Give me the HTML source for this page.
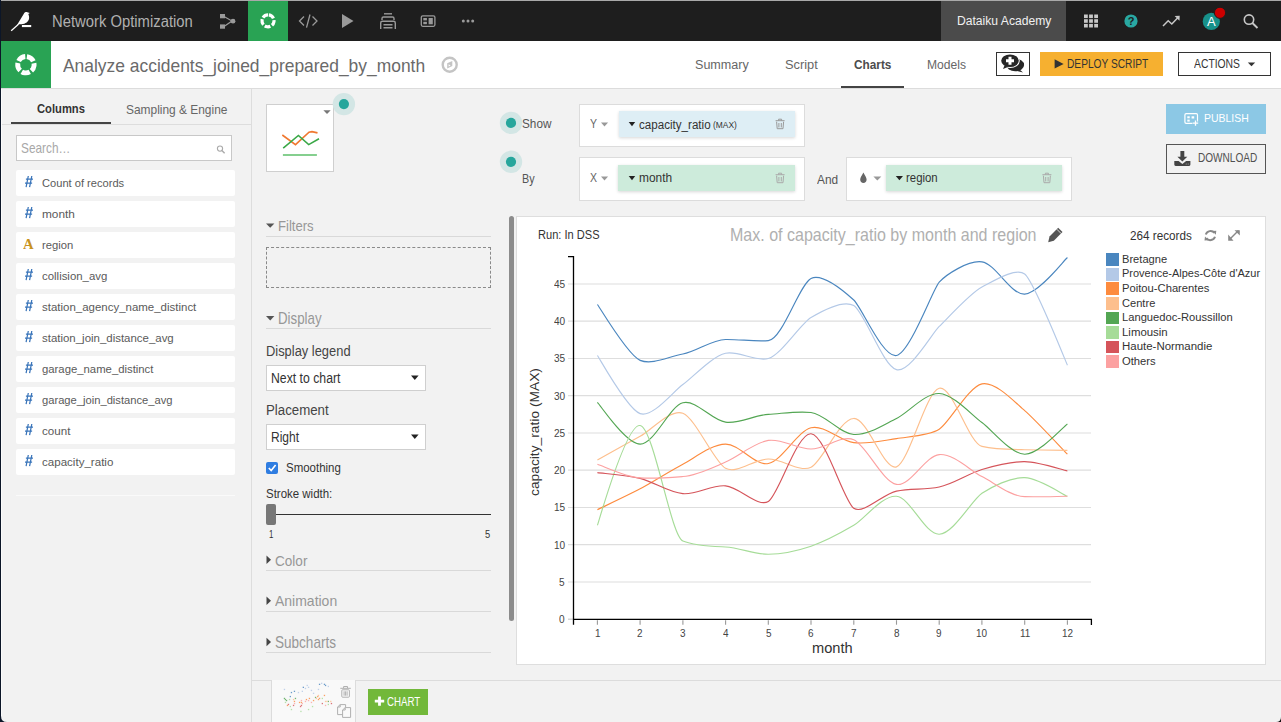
<!DOCTYPE html>
<html><head><meta charset="utf-8"><title>Dataiku Charts</title>
<style>
html,body{margin:0;padding:0;}
body{width:1281px;height:722px;overflow:hidden;position:relative;background:#f2f2f2;font-family:"Liberation Sans",sans-serif;}
.t{position:absolute;white-space:nowrap;line-height:1;transform-origin:0 0;}
.r{position:absolute;}
.s{position:absolute;overflow:visible;}
</style></head><body>
<div class="r" style="left:0px;top:0px;width:1281px;height:722px;background:#f2f2f2;"></div>
<div class="r" style="left:0px;top:0px;width:1281px;height:41px;background:#1e1e1e;"></div>
<div class="r" style="left:0px;top:0px;width:1281px;height:1px;background:#a9a9a9;"></div>
<div class="r" style="left:248px;top:1px;width:40px;height:40px;background:#29a354;"></div>
<div class="r" style="left:941px;top:1px;width:125px;height:40px;background:#4b4b4b;"></div>
<div class="r" style="left:0px;top:41px;width:1281px;height:47px;background:#ffffff;"></div>
<div class="r" style="left:1px;top:41px;width:50px;height:47px;background:#29a354;"></div>
<div class="r" style="left:0px;top:88px;width:1281px;height:1px;background:#dcdcdc;"></div>
<div class="r" style="left:0px;top:0px;width:1px;height:722px;background:#0c1628;"></div>
<div class="t" style="left:51.50px;top:14px;font-size:15.84px;color:#b0b0b0;font-weight:normal;transform:scaleX(0.9359);">Network Optimization</div>
<div class="t" style="left:956.60px;top:15px;font-size:12.65px;color:#f0f0f0;font-weight:normal;transform:scaleX(0.9593);">Dataiku Academy</div>
<svg class="s" style="left:0px;top:0px;" width="1281" height="722" viewBox="0 0 1281 722"><path d="M17.6,24.8 C18.6,24.1 20,24.3 21.5,24.2 C25.5,23.9 28.8,21.5 29.1,18.2 C29.3,16.4 28.8,15.0 28.3,13.9 L29.8,13.0 L27.3,12.2 C26,11.6 24.6,12.2 24.0,13.4 L17.0,25.0 Z" fill="#fff"/><path d="M11.2,30.7 L18.5,24.3" stroke="#fff" stroke-width="1.3"/><rect x="21.9" y="25.0" width="9.3" height="2.1" fill="#fff"/><g fill="#9a9a9a"><rect x="220" y="14" width="5" height="4.3"/><rect x="220" y="24.4" width="5" height="4.3"/><circle cx="233" cy="21.2" r="2.4"/></g><path d="M224,16.5 L232,21 L224,26.5" stroke="#9a9a9a" stroke-width="1.2" fill="none"/><circle cx="268" cy="20.8" r="6.0" fill="none" stroke="#fff" stroke-width="3.2" stroke-dasharray="5.760 1.780" transform="rotate(-81.5 268 20.8)"/><path d="M304,16.5 L299.5,21 L304,25.5 M312.5,16.5 L317,21 L312.5,25.5 M310,14.5 L306.5,27.7" stroke="#9a9a9a" stroke-width="1.3" fill="none"/><path d="M342,14 L353.5,21 L342,28 Z" fill="#9a9a9a"/><g stroke="#9a9a9a" stroke-width="1.4" fill="none"><path d="M384,13.8 H392"/><path d="M382,20 V18.5 Q382,17 383.5,17 H392.5 Q394,17 394,18.5 V20"/><path d="M380.7,29 V23 Q380.7,21.3 382.4,21.3 H393.6 Q395.3,21.3 395.3,23 V29"/><path d="M383.5,24.8 H392.5 M383.5,27.8 H392.5"/></g><rect x="421.3" y="15.8" width="13.6" height="10.5" rx="1.5" fill="none" stroke="#9a9a9a" stroke-width="1.3"/><g fill="#9a9a9a"><rect x="423.3" y="18" width="3.6" height="2.4"/><rect x="423.3" y="21.8" width="3.6" height="2.4"/><rect x="428.6" y="18" width="4.2" height="6.3"/></g><g fill="#9a9a9a"><circle cx="463.3" cy="21" r="1.5"/><circle cx="468" cy="21" r="1.5"/><circle cx="472.7" cy="21" r="1.5"/></g><g fill="#c8c8c8"><rect x="1084.0" y="14.5" width="3.8" height="3.6"/><rect x="1084.0" y="19.2" width="3.8" height="3.6"/><rect x="1084.0" y="23.9" width="3.8" height="3.6"/><rect x="1089.1" y="14.5" width="3.8" height="3.6"/><rect x="1089.1" y="19.2" width="3.8" height="3.6"/><rect x="1089.1" y="23.9" width="3.8" height="3.6"/><rect x="1094.2" y="14.5" width="3.8" height="3.6"/><rect x="1094.2" y="19.2" width="3.8" height="3.6"/><rect x="1094.2" y="23.9" width="3.8" height="3.6"/></g><circle cx="1131" cy="21" r="6.6" fill="#29a8a2"/><text x="1131" y="25.2" font-size="11" font-weight="bold" text-anchor="middle" fill="#1e1e1e" font-family="Liberation Sans">?</text><path d="M1163,26 L1168.2,20.8 L1171.8,24 L1178.5,17" stroke="#c8c8c8" stroke-width="1.5" fill="none"/><path d="M1174.6,16 L1179.7,15.8 L1179.5,20.8 Z" fill="#c8c8c8"/><circle cx="1211.3" cy="21.4" r="8.6" fill="#17918a"/><text x="1211.3" y="26.3" font-size="13" text-anchor="middle" fill="#fff" font-family="Liberation Sans">A</text><circle cx="1220" cy="12.8" r="5.6" fill="#cc0000" stroke="#1e1e1e" stroke-width="1"/><circle cx="1249" cy="19.6" r="4.7" fill="none" stroke="#c8c8c8" stroke-width="1.6"/><path d="M1252.4,23 L1257.5,28" stroke="#c8c8c8" stroke-width="1.9"/><circle cx="25.9" cy="64.7" r="8.2" fill="none" stroke="#fff" stroke-width="4.9" stroke-dasharray="8.301 2.004" transform="rotate(-83.0 25.9 64.7)"/><circle cx="449.7" cy="64.7" r="7.0" fill="none" stroke="#c4c4c4" stroke-width="2.4"/><path d="M447.2,63.3 L452.3,61.1 L452.3,66.1 L447.2,68.6 Z" fill="#c4c4c4"/><path d="M448.6,64.2 L450.6,65.4 L448.6,66.6 Z" fill="#fff"/></svg>
<div class="t" style="left:63.30px;top:57px;font-size:18.60px;color:#6a6a6a;font-weight:normal;transform:scaleX(0.9366);">Analyze accidents_joined_prepared_by_month</div>
<div class="t" style="left:695.20px;top:58px;font-size:13.66px;color:#666;font-weight:normal;transform:scaleX(0.9204);">Summary</div>
<div class="t" style="left:785.40px;top:58px;font-size:13.66px;color:#666;font-weight:normal;transform:scaleX(0.9392);">Script</div>
<div class="t" style="left:853.80px;top:58px;font-size:13.66px;color:#4c4c4c;font-weight:bold;transform:scaleX(0.8642);">Charts</div>
<div class="t" style="left:927.00px;top:58px;font-size:13.66px;color:#666;font-weight:normal;transform:scaleX(0.8855);">Models</div>
<div class="r" style="left:841px;top:86px;width:63px;height:2px;background:#444;"></div>
<div class="r" style="left:996px;top:52px;width:34px;height:24px;background:#fff;box-sizing:border-box;border:1px solid #333;"></div>
<svg class="s" style="left:990px;top:50px;" width="40" height="30" viewBox="990 50 40 30"><ellipse cx="1015.2" cy="65" rx="8.9" ry="6.2" fill="#262626"/><path d="M1019,69 L1023,72.6 L1015.5,70.5 Z" fill="#262626"/><ellipse cx="1010" cy="60.8" rx="9.8" ry="7.3" fill="#fff"/><ellipse cx="1010" cy="60.8" rx="8.8" ry="6.3" fill="#262626"/><path d="M1004.5,65.5 L1003,69 L1008.5,66.8 Z" fill="#262626"/><path d="M1010,56.8 V64.8 M1006,60.8 H1014" stroke="#fff" stroke-width="3"/></svg>
<div class="r" style="left:1040px;top:52px;width:123px;height:24px;background:#f6b030;"></div>
<svg class="s" style="left:1050px;top:55px;" width="20" height="20" viewBox="1050 55 20 20"><path d="M1054.6,59.2 L1063.6,63.9 L1054.6,68.6 Z" fill="#333"/></svg>
<div class="t" style="left:1066.80px;top:58px;font-size:12.50px;color:#333;font-weight:normal;transform:scaleX(0.8136);">DEPLOY SCRIPT</div>
<div class="r" style="left:1178px;top:52px;width:93px;height:24px;background:#fff;box-sizing:border-box;border:1px solid #333;"></div>
<div class="t" style="left:1194.00px;top:58px;font-size:12.50px;color:#333;font-weight:normal;transform:scaleX(0.8279);">ACTIONS</div>
<svg class="s" style="left:1240px;top:55px;" width="20" height="20" viewBox="1240 55 20 20"><path d="M1247.8,62.5 L1255.2,62.5 L1251.5,66.3 Z" fill="#333"/></svg>
<div class="r" style="left:251px;top:89px;width:1px;height:633px;background:#dddddd;"></div>
<div class="t" style="left:36.90px;top:103px;font-size:12.50px;color:#333;font-weight:bold;transform:scaleX(0.8958);">Columns</div>
<div class="t" style="left:125.80px;top:103px;font-size:13.37px;color:#666;font-weight:normal;transform:scaleX(0.8925);">Sampling &amp; Engine</div>
<div class="r" style="left:1px;top:124px;width:250px;height:1px;background:#dddddd;"></div>
<div class="r" style="left:11px;top:122px;width:100px;height:2px;background:#444;"></div>
<div class="r" style="left:16px;top:135px;width:216px;height:26px;background:#fff;box-sizing:border-box;border:1px solid #c8c8c8;"></div>
<div class="t" style="left:21.30px;top:141px;font-size:14.10px;color:#a8a8a8;font-weight:normal;transform:scaleX(0.8389);">Search…</div>
<svg class="s" style="left:210px;top:140px;" width="20" height="20" viewBox="210 140 20 20"><circle cx="220" cy="148.6" r="2.6" fill="none" stroke="#aaa" stroke-width="1.1"/><path d="M221.9,150.5 L224.6,153.2" stroke="#aaa" stroke-width="1.4"/></svg>
<div class="r" style="left:16px;top:170px;width:219px;height:26px;background:#fff;border-radius:2px;"></div>
<div class="t" style="left:41.60px;top:177px;font-size:11.77px;color:#5a5a5a;font-weight:normal;transform:scaleX(0.9445);">Count of records</div>
<div class="r" style="left:16px;top:201px;width:219px;height:26px;background:#fff;border-radius:2px;"></div>
<div class="t" style="left:41.60px;top:208px;font-size:11.77px;color:#5a5a5a;font-weight:normal;transform:scaleX(1.0055);">month</div>
<div class="r" style="left:16px;top:232px;width:219px;height:26px;background:#fff;border-radius:2px;"></div>
<div class="t" style="left:41.60px;top:239px;font-size:11.77px;color:#5a5a5a;font-weight:normal;transform:scaleX(0.9565);">region</div>
<div class="t" style="left:23.3px;top:237px;font-size:14px;line-height:16px;color:#c8931f;font-weight:bold;font-family:'Liberation Serif',serif;transform:scaleX(1.05)">A</div>
<div class="r" style="left:16px;top:263px;width:219px;height:26px;background:#fff;border-radius:2px;"></div>
<div class="t" style="left:41.60px;top:270px;font-size:11.77px;color:#5a5a5a;font-weight:normal;transform:scaleX(0.9702);">collision_avg</div>
<div class="r" style="left:16px;top:294px;width:219px;height:26px;background:#fff;border-radius:2px;"></div>
<div class="t" style="left:41.60px;top:301px;font-size:11.77px;color:#5a5a5a;font-weight:normal;transform:scaleX(0.9749);">station_agency_name_distinct</div>
<div class="r" style="left:16px;top:325px;width:219px;height:26px;background:#fff;border-radius:2px;"></div>
<div class="t" style="left:41.60px;top:332px;font-size:11.77px;color:#5a5a5a;font-weight:normal;transform:scaleX(0.9728);">station_join_distance_avg</div>
<div class="r" style="left:16px;top:356px;width:219px;height:26px;background:#fff;border-radius:2px;"></div>
<div class="t" style="left:41.60px;top:363px;font-size:11.77px;color:#5a5a5a;font-weight:normal;transform:scaleX(0.9625);">garage_name_distinct</div>
<div class="r" style="left:16px;top:387px;width:219px;height:26px;background:#fff;border-radius:2px;"></div>
<div class="t" style="left:41.60px;top:394px;font-size:11.77px;color:#5a5a5a;font-weight:normal;transform:scaleX(0.9501);">garage_join_distance_avg</div>
<div class="r" style="left:16px;top:418px;width:219px;height:26px;background:#fff;border-radius:2px;"></div>
<div class="t" style="left:41.60px;top:425px;font-size:11.77px;color:#5a5a5a;font-weight:normal;transform:scaleX(0.9861);">count</div>
<div class="r" style="left:16px;top:449px;width:219px;height:26px;background:#fff;border-radius:2px;"></div>
<div class="t" style="left:41.60px;top:456px;font-size:11.77px;color:#5a5a5a;font-weight:normal;transform:scaleX(0.9830);">capacity_ratio</div>
<svg class="s" style="left:0px;top:0px;" width="1281" height="722" viewBox="0 0 1281 722"><path d="M26.1,187.1 L28.3,176 M29.6,187.1 L31.8,176 M25.9,179.2 H33 M25,183.1 H32.1" stroke="#3a75ba" stroke-width="1.25" fill="none"/><path d="M26.1,218.1 L28.3,207 M29.6,218.1 L31.8,207 M25.9,210.2 H33 M25,214.1 H32.1" stroke="#3a75ba" stroke-width="1.25" fill="none"/><path d="M26.1,280.1 L28.3,269 M29.6,280.1 L31.8,269 M25.9,272.2 H33 M25,276.1 H32.1" stroke="#3a75ba" stroke-width="1.25" fill="none"/><path d="M26.1,311.1 L28.3,300 M29.6,311.1 L31.8,300 M25.9,303.2 H33 M25,307.1 H32.1" stroke="#3a75ba" stroke-width="1.25" fill="none"/><path d="M26.1,342.1 L28.3,331 M29.6,342.1 L31.8,331 M25.9,334.2 H33 M25,338.1 H32.1" stroke="#3a75ba" stroke-width="1.25" fill="none"/><path d="M26.1,373.1 L28.3,362 M29.6,373.1 L31.8,362 M25.9,365.2 H33 M25,369.1 H32.1" stroke="#3a75ba" stroke-width="1.25" fill="none"/><path d="M26.1,404.1 L28.3,393 M29.6,404.1 L31.8,393 M25.9,396.2 H33 M25,400.1 H32.1" stroke="#3a75ba" stroke-width="1.25" fill="none"/><path d="M26.1,435.1 L28.3,424 M29.6,435.1 L31.8,424 M25.9,427.2 H33 M25,431.1 H32.1" stroke="#3a75ba" stroke-width="1.25" fill="none"/><path d="M26.1,466.1 L28.3,455 M29.6,466.1 L31.8,455 M25.9,458.2 H33 M25,462.1 H32.1" stroke="#3a75ba" stroke-width="1.25" fill="none"/></svg>
<div class="r" style="left:16px;top:495px;width:219px;height:1px;background:#fafafa;"></div>
<div class="r" style="left:266px;top:104px;width:68px;height:68px;background:#fff;box-sizing:border-box;border:1px solid #cfcfcf;"></div>
<svg class="s" style="left:260px;top:100px;" width="80" height="80" viewBox="260 100 80 80"><path d="M323.4,110.3 L330.7,110.3 L327,114 Z" fill="#777"/><polyline points="282.3,135 295.5,144.6 309,132.2 312,131.6 317.5,132.9" fill="none" stroke="#f07830" stroke-width="1.6"/><polyline points="283.2,148.2 298.4,135.5 308.7,144.6 319,138.8" fill="none" stroke="#3aa847" stroke-width="1.6"/><path d="M282.9,155 H316.9" stroke="#5cbf6a" stroke-width="1.6"/></svg>
<svg class="s" style="left:0px;top:0px;" width="1281" height="722" viewBox="0 0 1281 722"><circle cx="343.9" cy="104.1" r="11.2" fill="#d3e6e5"/><circle cx="343.9" cy="104.1" r="5.1" fill="#26a69c"/><circle cx="511" cy="122.9" r="11.2" fill="#d3e6e5"/><circle cx="511" cy="122.9" r="5.1" fill="#26a69c"/><circle cx="511" cy="161.8" r="11.2" fill="#d3e6e5"/><circle cx="511" cy="161.8" r="5.1" fill="#26a69c"/></svg>
<svg class="s" style="left:0px;top:0px;" width="1281" height="722" viewBox="0 0 1281 722"><path d="M266,223.4 L274.4,223.4 L270.2,227.8 Z" fill="#555"/></svg>
<div class="t" style="left:278.00px;top:218px;font-size:15.26px;color:#979797;font-weight:normal;transform:scaleX(0.8593);">Filters</div>
<div class="r" style="left:266px;top:236px;width:225px;height:1px;background:#d9d9d9;"></div>
<div class="r" style="left:266px;top:247px;width:225px;height:41px;box-sizing:border-box;border:1px dashed #8a8a8a;"></div>
<svg class="s" style="left:0px;top:0px;" width="1281" height="722" viewBox="0 0 1281 722"><path d="M266,316.0 L274.4,316.0 L270.2,320.4 Z" fill="#555"/></svg>
<div class="t" style="left:278.00px;top:311px;font-size:15.70px;color:#979797;font-weight:normal;transform:scaleX(0.8471);">Display</div>
<div class="r" style="left:266px;top:328px;width:225px;height:1px;background:#d9d9d9;"></div>
<div class="t" style="left:266.00px;top:344px;font-size:14.24px;color:#444;font-weight:normal;transform:scaleX(0.9055);">Display legend</div>
<div class="r" style="left:266px;top:365px;width:160px;height:26px;background:#fff;box-sizing:border-box;border:1px solid #cfcfcf;"></div>
<div class="t" style="left:271.30px;top:372px;font-size:13.95px;color:#333;font-weight:normal;transform:scaleX(0.8787);">Next to chart</div>
<svg class="s" style="left:0px;top:0px;" width="1281" height="722" viewBox="0 0 1281 722"><path d="M411,375.6 L418.6,375.6 L414.8,379.9 Z" fill="#222"/></svg>
<div class="t" style="left:266.00px;top:403px;font-size:14.24px;color:#444;font-weight:normal;transform:scaleX(0.9317);">Placement</div>
<div class="r" style="left:266px;top:424px;width:160px;height:26px;background:#fff;box-sizing:border-box;border:1px solid #cfcfcf;"></div>
<div class="t" style="left:271.30px;top:431px;font-size:13.95px;color:#333;font-weight:normal;transform:scaleX(0.8627);">Right</div>
<svg class="s" style="left:0px;top:0px;" width="1281" height="722" viewBox="0 0 1281 722"><path d="M411,434.6 L418.6,434.6 L414.8,438.9 Z" fill="#222"/></svg>
<div class="r" style="left:266px;top:462px;width:12px;height:12px;background:#2f7de1;border-radius:2px;"></div>
<svg class="s" style="left:0px;top:0px;" width="1281" height="722" viewBox="0 0 1281 722"><path d="M268.8,468 L271.2,470.6 L275.6,465" stroke="#fff" stroke-width="1.6" fill="none"/></svg>
<div class="t" style="left:286.00px;top:462px;font-size:12.50px;color:#333;font-weight:normal;transform:scaleX(0.9170);">Smoothing</div>
<div class="t" style="left:266.00px;top:488px;font-size:12.50px;color:#333;font-weight:normal;transform:scaleX(0.9176);">Stroke width:</div>
<div class="r" style="left:276px;top:514px;width:215px;height:1px;background:#333;"></div>
<div class="r" style="left:266px;top:504px;width:10px;height:21px;background:#777;border-radius:2px;"></div>
<div class="t" style="left:268.60px;top:529px;font-size:11.19px;color:#333;font-weight:normal;transform:scaleX(0.7070);">1</div>
<div class="t" style="left:485.30px;top:529px;font-size:11.19px;color:#333;font-weight:normal;transform:scaleX(0.8355);">5</div>
<svg class="s" style="left:0px;top:0px;" width="1281" height="722" viewBox="0 0 1281 722"><path d="M266.5,555.5 L271,559.8 L266.5,564.1 Z" fill="#444"/></svg>
<div class="t" style="left:274.50px;top:553px;font-size:15.55px;color:#979797;font-weight:normal;transform:scaleX(0.8718);">Color</div>
<div class="r" style="left:266px;top:570px;width:225px;height:1px;background:#d9d9d9;"></div>
<svg class="s" style="left:0px;top:0px;" width="1281" height="722" viewBox="0 0 1281 722"><path d="M266.5,596.4 L271,600.7 L266.5,605.0 Z" fill="#444"/></svg>
<div class="t" style="left:274.50px;top:593px;font-size:15.12px;color:#979797;font-weight:normal;transform:scaleX(0.9254);">Animation</div>
<div class="r" style="left:266px;top:611px;width:225px;height:1px;background:#d9d9d9;"></div>
<svg class="s" style="left:0px;top:0px;" width="1281" height="722" viewBox="0 0 1281 722"><path d="M266.5,637.7 L271,642.0 L266.5,646.3 Z" fill="#444"/></svg>
<div class="t" style="left:274.50px;top:635px;font-size:15.70px;color:#979797;font-weight:normal;transform:scaleX(0.8631);">Subcharts</div>
<div class="r" style="left:266px;top:652px;width:225px;height:1px;background:#d9d9d9;"></div>
<div class="r" style="left:509px;top:216px;width:5px;height:405px;background:#8c8c8c;border-radius:3px;"></div>
<div class="r" style="left:252px;top:680px;width:1029px;height:1px;background:#dcdcdc;"></div>
<div class="r" style="left:271px;top:680px;width:85px;height:42px;background:#f9f9f9;box-sizing:border-box;border-left:1px solid #dcdcdc;border-right:1px solid #dcdcdc;"></div>
<svg class="s" style="left:0px;top:0px;" width="1281" height="722" viewBox="0 0 1281 722"><g stroke="#b0b0b0" stroke-width="1" fill="none"><path d="M340.3,688.3 H350.8 M343.6,688.3 V686.5 H347.5 V688.3"/><rect x="341.8" y="689.8" width="7.6" height="7.4" rx="0.8"/><path d="M344.1,691.3 V695.7 M345.6,691.3 V695.7 M347.1,691.3 V695.7"/><path d="M337.6,714.6 V707 L340.2,704.6 H345.6 V714.6 Z M337.6,707 H340.2 V704.6"/><path d="M342.6,717.4 V710 L345.2,707.6 H350.6 V717.4 Z" fill="#fafafa"/><path d="M342.6,710 H345.2 V707.6"/></g></svg>
<div class="r" style="left:368px;top:689px;width:60px;height:26px;background:#72b83a;"></div>
<svg class="s" style="left:0px;top:0px;" width="1281" height="722" viewBox="0 0 1281 722"><path d="M374.8,701.1 H384.2 M379.5,696.4 V705.8" stroke="#fff" stroke-width="2.8"/></svg>
<div class="t" style="left:386.90px;top:695px;font-size:13.23px;color:#fff;font-weight:normal;transform:scaleX(0.7348);">CHART</div>
<div class="t" style="left:521.70px;top:118px;font-size:12.50px;color:#555;font-weight:normal;transform:scaleX(0.9403);">Show</div>
<div class="t" style="left:521.70px;top:173px;font-size:12.06px;color:#555;font-weight:normal;transform:scaleX(0.8949);">By</div>
<div class="r" style="left:579px;top:104px;width:226px;height:43px;background:#fff;box-sizing:border-box;border:1px solid #dcdcdc;"></div>
<div class="r" style="left:579px;top:157px;width:226px;height:44px;background:#fff;box-sizing:border-box;border:1px solid #dcdcdc;"></div>
<div class="r" style="left:846px;top:157px;width:226px;height:44px;background:#fff;box-sizing:border-box;border:1px solid #dcdcdc;"></div>
<div class="t" style="left:589.60px;top:118px;font-size:12.21px;color:#666;font-weight:normal;transform:scaleX(0.8595);">Y</div>
<div class="t" style="left:589.60px;top:172px;font-size:12.21px;color:#666;font-weight:normal;transform:scaleX(0.8595);">X</div>
<svg class="s" style="left:0px;top:0px;" width="1281" height="722" viewBox="0 0 1281 722"><path d="M601,122.4 L608.1,122.4 L604.5,126.6 Z" fill="#999"/><path d="M601,176.4 L608.1,176.4 L604.5,180.6 Z" fill="#999"/><path d="M873.4,176.4 L881.3,176.4 L877.3,180.6 Z" fill="#999"/><path d="M863.4,172.6 C862,175.5 860.2,177.5 860.2,179.6 C860.2,181.6 861.6,183 863.4,183 C865.2,183 866.6,181.6 866.6,179.6 C866.6,177.5 864.8,175.5 863.4,172.6 Z" fill="#666"/></svg>
<div class="r" style="left:619px;top:111px;width:176px;height:26px;background:#deeef5;box-shadow:0 1px 3px rgba(0,0,0,0.16);"></div>
<div class="r" style="left:618px;top:165px;width:177px;height:26px;background:#cdebdb;box-shadow:0 1px 3px rgba(0,0,0,0.16);"></div>
<div class="r" style="left:886px;top:165px;width:176px;height:26px;background:#cdebdb;box-shadow:0 1px 3px rgba(0,0,0,0.16);"></div>
<svg class="s" style="left:0px;top:0px;" width="1281" height="722" viewBox="0 0 1281 722"><path d="M628.7,122.1 L635.2,122.1 L632,126.3 Z" fill="#222"/><path d="M628.7,176.1 L635.2,176.1 L632,180.3 Z" fill="#222"/><path d="M895.8,176.1 L903,176.1 L899.4,180.3 Z" fill="#222"/></svg>
<div class="t" style="left:639.00px;top:119px;font-size:12.50px;color:#333;font-weight:normal;transform:scaleX(0.9284);">capacity_ratio</div>
<div class="t" style="left:713.40px;top:120px;font-size:9.59px;color:#333;font-weight:normal;transform:scaleX(0.8794);">(MAX)</div>
<div class="t" style="left:639.00px;top:172px;font-size:12.50px;color:#333;font-weight:normal;transform:scaleX(0.9528);">month</div>
<div class="t" style="left:906.40px;top:172px;font-size:12.50px;color:#333;font-weight:normal;transform:scaleX(0.9124);">region</div>
<div class="t" style="left:817.40px;top:174px;font-size:12.79px;color:#555;font-weight:normal;transform:scaleX(0.9272);">And</div>
<svg class="s" style="left:0px;top:0px;" width="1281" height="722" viewBox="0 0 1281 722"><g stroke="#999" stroke-width="1" fill="none"><path d="M775.6,120.7 H784.6"/><path d="M778.6,120.7 V119.2 H781.6 V120.7"/><path d="M776.6,121.7 L777.2,128.7 H783.0 L783.6,121.7"/><path d="M778.9,123.0 V127.4 M781.3000000000001,123.0 V127.4"/></g><g stroke="#aaa" stroke-width="1" fill="none"><path d="M775.6,174.7 H784.6"/><path d="M778.6,174.7 V173.2 H781.6 V174.7"/><path d="M776.6,175.7 L777.2,182.7 H783.0 L783.6,175.7"/><path d="M778.9,177.0 V181.39999999999998 M781.3000000000001,177.0 V181.39999999999998"/></g><g stroke="#aaa" stroke-width="1" fill="none"><path d="M1042.4,174.7 H1051.4"/><path d="M1045.4,174.7 V173.2 H1048.4 V174.7"/><path d="M1043.4,175.7 L1044.0,182.7 H1049.8000000000002 L1050.4,175.7"/><path d="M1045.7,177.0 V181.39999999999998 M1048.1000000000001,177.0 V181.39999999999998"/></g></svg>
<div class="r" style="left:1166px;top:104px;width:100px;height:30px;background:#8cc8e5;"></div>
<svg class="s" style="left:0px;top:0px;" width="1281" height="722" viewBox="0 0 1281 722"><rect x="1184.9" y="113.6" width="12.6" height="9.8" rx="1.3" fill="none" stroke="#fff" stroke-width="1.2"/><g fill="#fff"><rect x="1187.3" y="116.3" width="2.4" height="2"/><rect x="1187.3" y="119.6" width="2.4" height="2"/><rect x="1191.6" y="116.3" width="2.6" height="2.2"/></g><path d="M1195.5,120 V126 M1192.5,123 H1198.5" stroke="#8cc8e5" stroke-width="3.2"/><path d="M1195.5,120.5 V125.8 M1192.8,123.1 H1198.2" stroke="#fff" stroke-width="1.3"/></svg>
<div class="t" style="left:1204.20px;top:113px;font-size:11.48px;color:#fff;font-weight:normal;transform:scaleX(0.9117);">PUBLISH</div>
<div class="r" style="left:1166px;top:144px;width:100px;height:30px;box-sizing:border-box;border:1px solid #555;"></div>
<svg class="s" style="left:0px;top:0px;" width="1281" height="722" viewBox="0 0 1281 722"><rect x="1180.4" y="151" width="3.9" height="6.5" fill="#444"/><path d="M1177.4,156.8 H1187.3 L1182.35,161.6 Z" fill="#444"/><path d="M1174.3,161 H1178.6 L1182.35,164 L1186.1,161 H1190.4 V164.6 Q1190.4,165.9 1189.1,165.9 H1175.6 Q1174.3,165.9 1174.3,164.6 Z" fill="#444"/><circle cx="1186.2" cy="164" r="0.5" fill="#bbb"/><circle cx="1188.2" cy="164" r="0.5" fill="#bbb"/></svg>
<div class="t" style="left:1198.00px;top:152px;font-size:12.50px;color:#505050;font-weight:normal;transform:scaleX(0.8042);">DOWNLOAD</div>
<div class="r" style="left:516px;top:216px;width:750px;height:449px;background:#fff;box-sizing:border-box;border:1px solid #dedede;"></div>
<div class="t" style="left:537.50px;top:229px;font-size:12.35px;color:#333;font-weight:normal;transform:scaleX(0.8971);">Run: In DSS</div>
<div class="t" style="left:729.60px;top:227px;font-size:17.44px;color:#b0b0b0;font-weight:normal;transform:scaleX(0.9193);">Max. of capacity_ratio by month and region</div>
<svg class="s" style="left:0px;top:0px;" width="1281" height="722" viewBox="0 0 1281 722"><path d="M1049.5,236.5 L1058.2,227.8 L1062.5,232.1 L1053.8,240.8 L1048.2,242.2 Z" fill="#555"/><path d="M1056.8,229.2 L1061.1,233.5" stroke="#fff" stroke-width="0.8"/></svg>
<div class="t" style="left:1129.90px;top:230px;font-size:12.79px;color:#333;font-weight:normal;transform:scaleX(0.9150);">264 records</div>
<svg class="s" style="left:0px;top:0px;" width="1281" height="722" viewBox="0 0 1281 722"><g stroke="#888" stroke-width="2" fill="none"><path d="M1205.8,234.5 A5,5 0 0 1 1214.5,233"/><path d="M1215,236.7 A5,5 0 0 1 1206.3,238.2"/></g><path d="M1212.3,231 L1216.3,230.8 L1215.8,234.8 Z M1208.5,240.2 L1204.5,240.4 L1205,236.4 Z" fill="#888"/><g stroke="#888" stroke-width="1.5"><path d="M1229.5,239.5 L1238.5,230.5"/></g><path d="M1234.5,230.2 L1239.8,230.2 L1239.8,235.5 Z M1228.2,234.5 L1228.2,240.8 L1233.5,240.8 Z" fill="#888"/></svg>
<div class="r" style="left:1106px;top:253.3px;width:13px;height:12.800000000000011px;background:#4a86bf;"></div>
<div class="t" style="left:1121.60px;top:254px;font-size:10.61px;color:#333;font-weight:normal;transform:scaleX(1.0474);">Bretagne</div>
<div class="r" style="left:1106px;top:267.9px;width:13px;height:12.800000000000011px;background:#b4c9e7;"></div>
<div class="t" style="left:1121.60px;top:268px;font-size:10.61px;color:#333;font-weight:normal;transform:scaleX(1.0342);">Provence-Alpes-Côte d&#x27;Azur</div>
<div class="r" style="left:1106px;top:282.4px;width:13px;height:12.800000000000011px;background:#fd8b3e;"></div>
<div class="t" style="left:1121.60px;top:283px;font-size:10.61px;color:#333;font-weight:normal;transform:scaleX(1.0573);">Poitou-Charentes</div>
<div class="r" style="left:1106px;top:297.0px;width:13px;height:12.800000000000011px;background:#fdbf8d;"></div>
<div class="t" style="left:1121.60px;top:298px;font-size:10.61px;color:#333;font-weight:normal;transform:scaleX(1.0457);">Centre</div>
<div class="r" style="left:1106px;top:311.6px;width:13px;height:12.799999999999955px;background:#53a653;"></div>
<div class="t" style="left:1121.60px;top:312px;font-size:10.61px;color:#333;font-weight:normal;transform:scaleX(1.0534);">Languedoc-Roussillon</div>
<div class="r" style="left:1106px;top:326.1px;width:13px;height:12.799999999999955px;background:#a6dc98;"></div>
<div class="t" style="left:1121.60px;top:327px;font-size:10.61px;color:#333;font-weight:normal;transform:scaleX(1.0763);">Limousin</div>
<div class="r" style="left:1106px;top:340.7px;width:13px;height:12.800000000000011px;background:#d5545a;"></div>
<div class="t" style="left:1121.60px;top:341px;font-size:10.61px;color:#333;font-weight:normal;transform:scaleX(1.0795);">Haute-Normandie</div>
<div class="r" style="left:1106px;top:355.3px;width:13px;height:12.800000000000011px;background:#fca1a1;"></div>
<div class="t" style="left:1121.60px;top:356px;font-size:10.61px;color:#333;font-weight:normal;transform:scaleX(1.0584);">Others</div>
<div class="t" style="left:559.40px;top:577px;font-size:11.19px;color:#444;font-weight:normal;transform:scaleX(0.9000);">5</div>
<div class="t" style="left:553.80px;top:540px;font-size:11.19px;color:#444;font-weight:normal;transform:scaleX(0.9000);">10</div>
<div class="t" style="left:553.80px;top:502px;font-size:11.19px;color:#444;font-weight:normal;transform:scaleX(0.9000);">15</div>
<div class="t" style="left:553.80px;top:465px;font-size:11.19px;color:#444;font-weight:normal;transform:scaleX(0.9000);">20</div>
<div class="t" style="left:553.80px;top:428px;font-size:11.19px;color:#444;font-weight:normal;transform:scaleX(0.9000);">25</div>
<div class="t" style="left:553.80px;top:391px;font-size:11.19px;color:#444;font-weight:normal;transform:scaleX(0.9000);">30</div>
<div class="t" style="left:553.80px;top:353px;font-size:11.19px;color:#444;font-weight:normal;transform:scaleX(0.9000);">35</div>
<div class="t" style="left:553.80px;top:316px;font-size:11.19px;color:#444;font-weight:normal;transform:scaleX(0.9000);">40</div>
<div class="t" style="left:553.80px;top:279px;font-size:11.19px;color:#444;font-weight:normal;transform:scaleX(0.9000);">45</div>
<div class="t" style="left:559.40px;top:614px;font-size:11.19px;color:#444;font-weight:normal;transform:scaleX(0.9000);">0</div>
<div class="t" style="left:594.64px;top:628px;font-size:11.05px;color:#444;font-weight:normal;transform:scaleX(0.9000);">1</div>
<div class="t" style="left:637.36px;top:628px;font-size:11.05px;color:#444;font-weight:normal;transform:scaleX(0.9000);">2</div>
<div class="t" style="left:680.09px;top:628px;font-size:11.05px;color:#444;font-weight:normal;transform:scaleX(0.9000);">3</div>
<div class="t" style="left:722.82px;top:628px;font-size:11.05px;color:#444;font-weight:normal;transform:scaleX(0.9000);">4</div>
<div class="t" style="left:765.54px;top:628px;font-size:11.05px;color:#444;font-weight:normal;transform:scaleX(0.9000);">5</div>
<div class="t" style="left:808.27px;top:628px;font-size:11.05px;color:#444;font-weight:normal;transform:scaleX(0.9000);">6</div>
<div class="t" style="left:851.00px;top:628px;font-size:11.05px;color:#444;font-weight:normal;transform:scaleX(0.9000);">7</div>
<div class="t" style="left:893.73px;top:628px;font-size:11.05px;color:#444;font-weight:normal;transform:scaleX(0.9000);">8</div>
<div class="t" style="left:936.45px;top:628px;font-size:11.05px;color:#444;font-weight:normal;transform:scaleX(0.9000);">9</div>
<div class="t" style="left:976.42px;top:628px;font-size:11.05px;color:#444;font-weight:normal;transform:scaleX(0.9000);">10</div>
<div class="t" style="left:1019.51px;top:628px;font-size:11.05px;color:#444;font-weight:normal;transform:scaleX(0.9000);">11</div>
<div class="t" style="left:1061.87px;top:628px;font-size:11.05px;color:#444;font-weight:normal;transform:scaleX(0.9000);">12</div>
<svg class="s" style="left:0px;top:0px;" width="1281" height="722" viewBox="0 0 1281 722"><path d="M568,582.0 H1091" stroke="#dedede" stroke-width="1.2"/><path d="M568,544.7 H1091" stroke="#dedede" stroke-width="1.2"/><path d="M568,507.5 H1091" stroke="#dedede" stroke-width="1.2"/><path d="M568,470.2 H1091" stroke="#dedede" stroke-width="1.2"/><path d="M568,433.0 H1091" stroke="#dedede" stroke-width="1.2"/><path d="M568,395.7 H1091" stroke="#dedede" stroke-width="1.2"/><path d="M568,358.5 H1091" stroke="#dedede" stroke-width="1.2"/><path d="M568,321.2 H1091" stroke="#dedede" stroke-width="1.2"/><path d="M568,284.0 H1091" stroke="#dedede" stroke-width="1.2"/><path d="M568,619.2 H573" stroke="#ccc" stroke-width="1.2"/><path d="M597.4,620.2 V624.7" stroke="#999" stroke-width="1.1"/><path d="M640.1,620.2 V624.7" stroke="#999" stroke-width="1.1"/><path d="M682.9,620.2 V624.7" stroke="#999" stroke-width="1.1"/><path d="M725.6,620.2 V624.7" stroke="#999" stroke-width="1.1"/><path d="M768.3,620.2 V624.7" stroke="#999" stroke-width="1.1"/><path d="M811.0,620.2 V624.7" stroke="#999" stroke-width="1.1"/><path d="M853.8,620.2 V624.7" stroke="#999" stroke-width="1.1"/><path d="M896.5,620.2 V624.7" stroke="#999" stroke-width="1.1"/><path d="M939.2,620.2 V624.7" stroke="#999" stroke-width="1.1"/><path d="M981.9,620.2 V624.7" stroke="#999" stroke-width="1.1"/><path d="M1024.7,620.2 V624.7" stroke="#999" stroke-width="1.1"/><path d="M1067.4,620.2 V624.7" stroke="#999" stroke-width="1.1"/><path d="M568,256.6 H573.5 V624.8" stroke="#000" stroke-width="1.3" fill="none"/><path d="M573,619.4 H1091.4 V625" stroke="#000" stroke-width="1.3" fill="none"/></svg>
<div class="t" style="left:812.20px;top:642px;font-size:13.95px;color:#333;font-weight:normal;transform:scaleX(1.0496);">month</div>
<div class="t" style="left:527.73px;top:496.20px;font-size:13.66px;color:#333;transform-origin:0 0;transform:rotate(-90deg) scaleX(1.0095);">capacity_ratio (MAX)</div>
<svg class="s" style="left:0px;top:0px;" width="1281" height="722" viewBox="0 0 1281 722"><path d="M597.40,304.48C600.03,307.92,627.93,355.35,640.13,360.35C652.32,365.35,669.02,356.41,682.85,354.02C696.69,351.63,711.34,339.73,725.58,339.49C739.82,339.25,754.15,341.70,768.31,340.61C782.47,339.53,799.42,283.93,811.04,278.41C822.66,272.89,845.91,292.93,853.76,300.02C861.62,307.10,882.85,358.36,896.49,355.51C910.14,352.65,932.75,289.23,939.22,282.14C945.69,275.05,967.97,259.93,981.95,261.88C995.92,263.83,1010.47,294.77,1024.67,294.06C1038.88,293.34,1063.28,261.07,1067.40,257.56" stroke="#4a86bf" stroke-width="1.15" fill="none"/><path d="M597.40,355.51C599.90,358.91,627.36,409.27,640.13,413.61C652.89,417.95,673.35,391.27,682.85,384.56C692.36,377.85,711.97,356.21,725.58,353.27C739.19,350.34,755.21,362.36,768.31,358.49C781.41,354.61,800.53,323.78,811.04,317.52C821.55,311.26,843.18,299.38,853.76,305.60C864.35,311.82,883.05,366.38,896.49,369.66C909.93,372.94,931.86,333.58,939.22,326.46C946.57,319.34,970.64,292.75,981.95,286.98C993.25,281.21,1015.64,267.08,1024.67,273.94C1033.70,280.80,1066.12,362.46,1067.40,365.19" stroke="#b4c9e7" stroke-width="1.15" fill="none"/><path d="M597.40,509.70C603.15,506.89,629.02,494.75,640.13,488.84C651.23,482.94,671.67,470.11,682.85,464.26C694.04,458.41,711.34,444.28,725.58,444.15C739.82,444.03,754.57,466.15,768.31,463.52C782.05,460.88,797.59,431.04,811.04,427.76C824.48,424.48,839.75,440.89,853.76,442.66C867.78,444.43,882.58,440.73,896.49,438.56C910.40,436.40,929.07,435.70,939.22,429.25C949.37,422.81,968.35,386.78,981.95,383.82C995.54,380.85,1016.19,403.64,1024.67,410.63C1033.16,417.62,1063.91,450.65,1067.40,454.21" stroke="#fd8b3e" stroke-width="1.15" fill="none"/><path d="M597.40,460.02C602.85,457.00,629.17,442.33,640.13,436.33C651.09,430.33,670.37,408.56,682.85,413.24C695.34,417.92,714.52,462.43,725.58,468.36C736.64,474.29,754.07,459.24,768.31,459.05C782.55,458.86,799.42,472.76,811.04,467.24C822.66,461.72,839.52,418.51,853.76,418.45C868.01,418.39,883.83,471.34,896.49,466.87C909.16,462.40,925.75,391.51,939.22,388.28C952.69,385.06,968.45,443.22,981.95,446.39C995.44,449.56,1010.43,449.52,1024.67,449.74C1038.91,449.95,1060.28,450.23,1067.40,450.33" stroke="#fdbf8d" stroke-width="1.15" fill="none"/><path d="M597.40,402.44C601.05,406.00,625.89,444.09,640.13,444.15C654.37,444.21,669.50,406.24,682.85,402.81C696.21,399.37,711.59,420.29,725.58,422.18C739.57,424.07,754.11,415.16,768.31,414.36C782.51,413.55,796.99,410.84,811.04,412.49C825.08,414.15,839.59,433.48,853.76,434.47C867.94,435.46,884.91,424.00,896.49,418.45C908.07,412.90,925.01,392.82,939.22,393.50C953.43,394.18,972.48,415.82,981.95,422.55C991.41,429.27,1010.43,453.96,1024.67,454.21C1038.91,454.46,1062.65,427.39,1067.40,424.04" stroke="#53a653" stroke-width="1.15" fill="none"/><path d="M597.40,525.34C598.50,522.77,626.35,423.01,640.13,425.53C653.91,428.05,670.71,535.94,682.85,540.99C695.00,546.04,711.37,546.30,725.58,546.95C739.79,547.59,754.07,554.37,768.31,554.25C782.55,554.12,798.26,550.52,811.04,546.20C823.82,541.88,843.14,531.55,853.76,525.34C864.38,519.14,882.40,494.82,896.49,496.29C910.58,497.77,924.99,534.78,939.22,534.28C953.44,533.79,972.05,499.87,981.95,493.31C991.84,486.76,1010.45,477.18,1024.67,477.67C1038.90,478.17,1061.42,493.69,1067.40,496.29" stroke="#a6dc98" stroke-width="1.15" fill="none"/><path d="M597.40,472.61C604.39,473.56,626.70,475.10,640.13,478.42C653.55,481.73,668.72,492.45,682.85,493.69C696.99,494.92,711.46,484.57,725.58,485.86C739.71,487.16,757.93,507.84,768.31,501.51C778.69,495.17,796.88,432.61,811.04,433.72C825.19,434.83,843.94,501.62,853.76,508.21C863.58,514.80,882.80,493.84,896.49,491.08C910.18,488.32,925.55,489.79,939.22,486.98C952.89,484.18,968.85,473.36,981.95,469.48C995.04,465.60,1010.43,461.41,1024.67,461.66C1038.91,461.90,1060.60,469.49,1067.40,470.97" stroke="#d5545a" stroke-width="1.15" fill="none"/><path d="M597.40,464.26C603.86,466.33,625.93,477.08,640.13,477.89C654.32,478.71,668.69,477.61,682.85,476.55C697.02,475.50,713.50,467.14,725.58,462.03C737.66,456.92,754.39,442.55,768.31,440.43C782.23,438.30,796.80,449.12,811.04,448.99C825.28,448.87,841.61,434.65,853.76,439.68C865.92,444.72,882.67,481.97,896.49,484.38C910.31,486.78,925.09,455.87,939.22,454.58C953.34,453.29,970.48,470.91,981.95,476.55C993.41,482.20,1010.44,496.29,1024.67,496.67C1038.91,497.04,1060.28,496.30,1067.40,496.29" stroke="#fca1a1" stroke-width="1.15" fill="none"/></svg>
<svg class="s" style="left:0px;top:0px;opacity:0.8;" width="1281" height="722" viewBox="0 0 1281 722"><rect x="318.9" y="683.7" width="1.3" height="1.3" fill="#4a86bf"/><rect x="323.8" y="683.7" width="1.3" height="1.3" fill="#4a86bf"/><rect x="324.9" y="684.8" width="1.3" height="1.3" fill="#4a86bf"/><rect x="302.7" y="686.7" width="1.3" height="1.3" fill="#4a86bf"/><rect x="293.8" y="690.7" width="1.3" height="1.3" fill="#4a86bf"/><rect x="290.8" y="691.9" width="1.3" height="1.3" fill="#4a86bf"/><rect x="289.7" y="695.9" width="1.3" height="1.3" fill="#4a86bf"/><rect x="321.0" y="682.7" width="1.3" height="1.3" fill="#b4c9e7"/><rect x="327.7" y="685.8" width="1.3" height="1.3" fill="#b4c9e7"/><rect x="307.9" y="686.7" width="1.3" height="1.3" fill="#b4c9e7"/><rect x="306.6" y="684.8" width="1.3" height="1.3" fill="#b4c9e7"/><rect x="297.8" y="691.9" width="1.3" height="1.3" fill="#b4c9e7"/><rect x="301.7" y="690.7" width="1.3" height="1.3" fill="#b4c9e7"/><rect x="310.8" y="689.8" width="1.3" height="1.3" fill="#b4c9e7"/><rect x="312.9" y="692.7" width="1.3" height="1.3" fill="#b4c9e7"/><rect x="317.8" y="688.8" width="1.3" height="1.3" fill="#b4c9e7"/><rect x="283.8" y="688.8" width="1.3" height="1.3" fill="#b4c9e7"/><rect x="304.8" y="687.8" width="1.3" height="1.3" fill="#b4c9e7"/><rect x="283.8" y="697.8" width="1.3" height="1.3" fill="#53a653"/><rect x="284.8" y="698.9" width="1.3" height="1.3" fill="#53a653"/><rect x="285.9" y="699.9" width="1.3" height="1.3" fill="#53a653"/><rect x="294.8" y="697.8" width="1.3" height="1.3" fill="#53a653"/><rect x="314.9" y="696.8" width="1.3" height="1.3" fill="#53a653"/><rect x="327.7" y="700.8" width="1.3" height="1.3" fill="#53a653"/><rect x="284.8" y="701.8" width="1.3" height="1.3" fill="#a6dc98"/><rect x="288.9" y="698.9" width="1.3" height="1.3" fill="#a6dc98"/><rect x="289.7" y="705.9" width="1.3" height="1.3" fill="#a6dc98"/><rect x="290.8" y="708.9" width="1.3" height="1.3" fill="#a6dc98"/><rect x="300.3" y="710.8" width="1.3" height="1.3" fill="#a6dc98"/><rect x="307.9" y="708.9" width="1.3" height="1.3" fill="#a6dc98"/><rect x="311.9" y="705.9" width="1.3" height="1.3" fill="#a6dc98"/><rect x="321.7" y="697.8" width="1.3" height="1.3" fill="#a6dc98"/><rect x="327.7" y="703.8" width="1.3" height="1.3" fill="#a6dc98"/><rect x="286.8" y="704.8" width="1.3" height="1.3" fill="#fd8b3e"/><rect x="293.8" y="700.8" width="1.3" height="1.3" fill="#fd8b3e"/><rect x="298.9" y="701.8" width="1.3" height="1.3" fill="#fd8b3e"/><rect x="300.8" y="701.8" width="1.3" height="1.3" fill="#fd8b3e"/><rect x="305.8" y="698.9" width="1.3" height="1.3" fill="#fd8b3e"/><rect x="308.8" y="697.8" width="1.3" height="1.3" fill="#fd8b3e"/><rect x="312.9" y="699.9" width="1.3" height="1.3" fill="#fd8b3e"/><rect x="318.9" y="697.8" width="1.3" height="1.3" fill="#fd8b3e"/><rect x="317.8" y="698.9" width="1.3" height="1.3" fill="#fd8b3e"/><rect x="323.8" y="694.8" width="1.3" height="1.3" fill="#fd8b3e"/><rect x="317.1" y="695.9" width="1.3" height="1.3" fill="#fd8b3e"/><rect x="292.9" y="698.9" width="1.3" height="1.3" fill="#fdbf8d"/><rect x="315.7" y="697.8" width="1.3" height="1.3" fill="#fdbf8d"/><rect x="324.9" y="700.8" width="1.3" height="1.3" fill="#fdbf8d"/><rect x="326.3" y="700.8" width="1.3" height="1.3" fill="#fdbf8d"/><rect x="330.1" y="700.8" width="1.3" height="1.3" fill="#fdbf8d"/><rect x="317.8" y="694.8" width="1.3" height="1.3" fill="#fdbf8d"/><rect x="287.8" y="703.8" width="1.3" height="1.3" fill="#d5545a"/><rect x="292.9" y="704.8" width="1.3" height="1.3" fill="#d5545a"/><rect x="299.9" y="705.9" width="1.3" height="1.3" fill="#d5545a"/><rect x="300.8" y="704.8" width="1.3" height="1.3" fill="#d5545a"/><rect x="321.7" y="702.9" width="1.3" height="1.3" fill="#d5545a"/><rect x="330.8" y="702.9" width="1.3" height="1.3" fill="#d5545a"/><rect x="300.8" y="699.9" width="1.3" height="1.3" fill="#fca1a1"/><rect x="293.9" y="702.9" width="1.3" height="1.3" fill="#fca1a1"/><rect x="301.7" y="702.9" width="1.3" height="1.3" fill="#fca1a1"/><rect x="304.8" y="700.8" width="1.3" height="1.3" fill="#fca1a1"/><rect x="307.9" y="699.9" width="1.3" height="1.3" fill="#fca1a1"/><rect x="310.8" y="701.8" width="1.3" height="1.3" fill="#fca1a1"/><rect x="324.9" y="704.8" width="1.3" height="1.3" fill="#fca1a1"/></svg>
<svg class="s" style="left:0px;top:0px;" width="1281" height="722" viewBox="0 0 1281 722"><path d="M1281,717 V722 H1276 Q1281,722 1281,717 Z" fill="#111"/><path d="M1,716 V722 H7 Q1,722 1,716 Z" fill="#0c1628"/></svg>
<div class="r" style="left:1px;top:89px;width:1px;height:627px;background:#fbfbfb;"></div>
</body></html>
